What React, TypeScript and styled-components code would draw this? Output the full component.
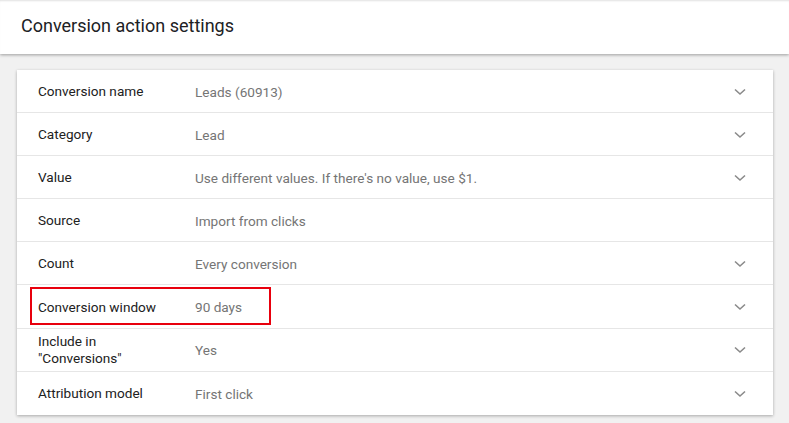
import styled, { createGlobalStyle } from 'styled-components';

const GlobalStyle = createGlobalStyle`
  html, body { margin: 0; padding: 0; }
  body {
    background: #f1f1f1;
    font-family: Roboto, "Liberation Sans", Arial, sans-serif;
    -webkit-font-smoothing: antialiased;
  }
`;

const Page = styled.div`
  width: 789px;
  height: 423px;
  overflow: hidden;
  background: #f1f1f1;
`;

const Header = styled.header`
  height: 54px;
  background: #fff;
  display: flex;
  align-items: center;
  padding-left: 21px;
  box-shadow: 0 1px 3px rgba(0, 0, 0, 0.35), inset 0 2px 2px -1px rgba(0, 0, 0, 0.12);
  position: relative;
  z-index: 1;

  h1 {
    margin: 0 0 3px;
    font-size: 18px;
    font-weight: 400;
    color: #202124;
  }
`;

const Card = styled.section`
  margin: 16px 16px 0 17px;
  background: #fff;
  box-shadow: 0 1px 3px rgba(0, 0, 0, 0.3);
`;

const Row = styled.div`
  box-sizing: border-box;
  height: 43.1px;
  display: grid;
  grid-template-columns: 157px 1fr 39px;
  align-items: center;
  padding-left: 21px;
  padding-top: 1px;
  border-bottom: 1px solid #e6e6e6;
  font-size: 13.6px;
  position: relative;

  &:last-child { border-bottom: none; }
`;

const Label = styled.div`
  color: #212121;
  line-height: 17px;
`;

const Value = styled.div`
  color: #757575;
`;

const Chevron = styled.span`
  display: flex;
  align-items: center;
  color: #8a8a8a;
`;

const Highlight = styled.div`
  position: absolute;
  left: 13px;
  top: 2px;
  width: 237px;
  height: 34px;
  border: 2px solid #e8000d;
  pointer-events: none;
`;

const ChevronIcon = () => (
  <svg width="12" height="8" viewBox="0 0 12 8">
    <path d="M1 1.5 L6 6 L11 1.5" fill="none" stroke="currentColor" strokeWidth="1.6" />
  </svg>
);

const rows: { label: React.ReactNode; value: string; chevron: boolean; highlight?: boolean }[] = [
  { label: 'Conversion name', value: 'Leads (60913)', chevron: true },
  { label: 'Category', value: 'Lead', chevron: true },
  { label: 'Value', value: "Use different values. If there's no value, use $1.", chevron: true },
  { label: 'Source', value: 'Import from clicks', chevron: false },
  { label: 'Count', value: 'Every conversion', chevron: true },
  { label: 'Conversion window', value: '90 days', chevron: true, highlight: true },
  { label: <>Include in<br />"Conversions"</>, value: 'Yes', chevron: true },
  { label: 'Attribution model', value: 'First click', chevron: true },
];

export default function App() {
  return (
    <Page>
      <GlobalStyle />
      <Header>
        <h1>Conversion action settings</h1>
      </Header>
      <Card>
        {rows.map((r, i) => (
          <Row key={i}>
            <Label>{r.label}</Label>
            <Value>{r.value}</Value>
            <Chevron>{r.chevron && <ChevronIcon />}</Chevron>
            {r.highlight && <Highlight />}
          </Row>
        ))}
      </Card>
    </Page>
  );
}
